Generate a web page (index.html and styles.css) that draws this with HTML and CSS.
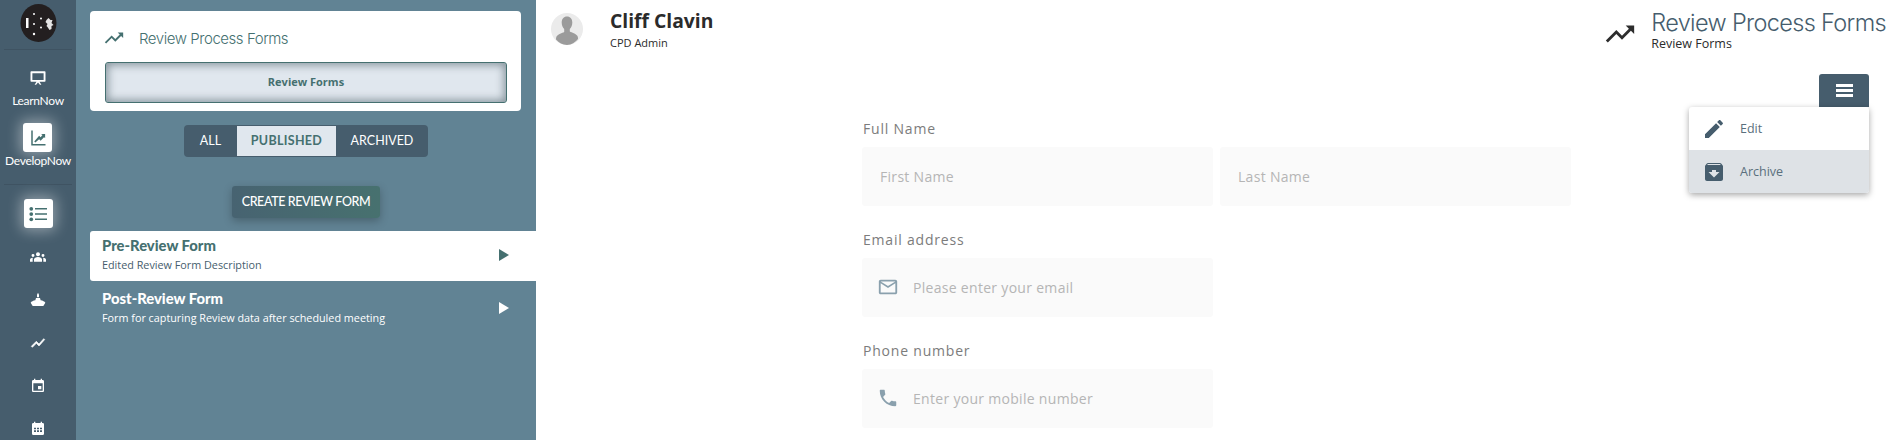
FILE: index.html
```html
<!DOCTYPE html>
<html lang="en">
<head>
    <meta charset="UTF-8">
    <title>Review Process Forms</title>
    <link rel="stylesheet" href="styles.css">
</head>
<body>
<div class="app">
    <!-- left icon rail -->
    <nav class="rail">
        <div class="logo">
            <svg viewBox="0 0 36 38" width="37" height="38">
                <ellipse cx="18" cy="19" rx="18" ry="19" fill="#231f20"/>
                <rect x="5.500" y="14" width="2.500" height="10" fill="#fff"/>
                <circle cx="13.500" cy="10" r="1" fill="#fff"/>
                <circle cx="13.500" cy="20" r="1" fill="#fff"/>
                <circle cx="13.500" cy="30" r="1.200" fill="#fff"/>
                <circle cx="20.500" cy="14.500" r="1" fill="#fff"/>
                <circle cx="20.500" cy="23.500" r="1" fill="#fff"/>
                <path d="M26 16l2-2 2 2 2 0-1 3 2 2-2 1 0 3-2 1-2-3-1-1 1-2-2-2z" fill="#e4e4e4"/>
            </svg>
        </div>
        <div class="rail-group rail-top">
            <a class="rail-item">
                <svg class="rail-icon" viewBox="0 0 24 24" width="18" height="18">
                    <path d="M3 3h18a1 1 0 0 1 1 1v12a1 1 0 0 1-1 1h-7l2.500 4h-2l-2.500-3-2.500 3h-2l2.500-4H3a1 1 0 0 1-1-1V4a1 1 0 0 1 1-1zm1.500 2.500v9h15v-9z" fill="#fff"/>
                </svg>
                <span class="rail-label">LearnNow</span>
            </a>
            <a class="rail-item">
                <span class="rail-box">
                    <svg viewBox="0 0 24 24">
                        <path d="M3 2h2v18h17v2H3z" fill="#457070"/>
                        <path d="M7 16.500l6.500-7.500 2 2 2.500-3-2-1.500h5.500v5.500L20 11l-4.500 4.500-2-2-5 4.500z" fill="#457070"/>
                    </svg>
                </span>
                <span class="rail-label">DevelopNow</span>
            </a>
        </div>
        <div class="rail-group rail-tools">
            <span class="rail-box">
                <svg viewBox="0 0 24 24">
                    <circle cx="3" cy="5" r="2.500" fill="#457070"/>
                    <circle cx="3" cy="12" r="2.500" fill="#457070"/>
                    <circle cx="3" cy="19" r="2.500" fill="#457070"/>
                    <path d="M8 4h16v2H8zM8 11h16v2H8zM8 18h16v2H8z" fill="#457070"/>
                </svg>
            </span>
            <svg class="tool" viewBox="0 0 24 24" width="16" height="16">
                <path d="M12 5a3 3 0 1 1 0 6 3 3 0 0 1 0-6zM4.500 7.500a2.200 2.200 0 1 1 0 4.400 2.200 2.200 0 0 1 0-4.400zm15 0a2.200 2.200 0 1 1 0 4.400 2.200 2.200 0 0 1 0-4.400zM6 19v-3.500c0-2 3-3.500 6-3.500s6 1.500 6 3.500V19zM0 19v-3c0-1.500 2-2.800 4.500-2.800-.4.600-.5 1.500-.5 2.300V19zm24 0h-4v-3.500c0-.8-.1-1.700-.5-2.300 2.500 0 4.500 1.300 4.500 2.800z" fill="#fff"/>
            </svg>
            <svg class="tool" viewBox="0 0 24 24" width="16" height="16">
                <path d="M12 1l1.500 3v4h-3V4zM9 9h6l1 3.500c3 .5 6 2 7 3.500l-3 5H4l-3-5c1-1.500 4-3 7-3.500z" fill="#fff"/>
            </svg>
            <svg class="tool" viewBox="0 0 24 24" width="16" height="16">
                <path d="M3.500 18.490l6-6.010 4 4L22 6.920l-1.410-1.410-7.090 7.970-4-4L2 16.990z" fill="#fff" stroke="#fff"/>
            </svg>
            <svg class="tool" viewBox="0 0 24 24" width="16" height="16">
                <path d="M17 12h-5v5h5v-5zM16 1v2H8V1H6v2H5c-1.110 0-1.990.900-1.990 2L3 19c0 1.100.890 2 2 2h14c1.100 0 2-.900 2-2V5c0-1.100-.900-2-2-2h-1V1h-2zm3 18H5V8h14v11z" fill="#fff"/>
            </svg>
            <svg class="tool" viewBox="0 0 24 24" width="16" height="16">
                <path d="M16 1v2H8V1H6v2H5a2 2 0 0 0-2 2v14a2 2 0 0 0 2 2h14a2 2 0 0 0 2-2V5a2 2 0 0 0-2-2h-1V1zM6 10h3v2.500H6zm4.500 0h3v2.500h-3zm4.500 0h3v2.500h-3zM6 14h3v2.500H6zm4.500 0h3v2.500h-3zm4.500 0h3v2.500h-3z" fill="#fff" fill-rule="evenodd"/>
            </svg>
        </div>
    </nav>

    <!-- forms panel -->
    <section class="panel">
        <div class="card">
            <div class="card-head">
                <svg viewBox="0 0 24 24" width="22" height="22">
                    <path d="M16 6l2.290 2.290-4.880 4.880-4-4L2 16.590 3.410 18l6-6 4 4 6.300-6.290L22 12V6z" fill="#457070"/>
                </svg>
                <span>Review Process Forms</span>
            </div>
            <div class="card-btn">Review Forms</div>
        </div>

        <div class="tabs">
            <span class="tab tab-all">ALL</span>
            <span class="tab active">PUBLISHED</span>
            <span class="tab">ARCHIVED</span>
        </div>

        <div class="create-wrap">
            <button class="create">CREATE REVIEW FORM</button>
        </div>

        <ul class="form-list">
            <li class="form-item selected">
                <div>
                    <h4>Pre-Review Form</h4>
                    <p>Edited Review Form Description</p>
                </div>
                <i class="arrow"></i>
            </li>
            <li class="form-item">
                <div>
                    <h4>Post-Review Form</h4>
                    <p>Form for capturing Review data after scheduled meeting</p>
                </div>
                <i class="arrow"></i>
            </li>
        </ul>
    </section>

    <!-- main content -->
    <main class="main">
        <header class="topbar">
            <div class="user">
                <svg class="avatar" viewBox="0 0 32 32" width="32" height="32">
                    <circle cx="16" cy="16" r="16" fill="#ebebeb"/>
                    <path d="M16 3.500c3.300 0 5.300 2.500 5.300 6 0 2.700-1 5-2.500 6.500v2.500c2 1.200 6.200 2 7.700 4.500.5 1 .5 2 .5 3A16 16 0 0 1 16 32a16 16 0 0 1-11-5.500c0-1 0-2 .5-3 1.500-2.500 5.700-3.300 7.700-4.500V16c-1.500-1.500-2.500-3.800-2.500-6.500 0-3.500 2-6 5.300-6z" fill="#9b9b9b"/>
                </svg>
                <div>
                    <div class="user-name">Cliff Clavin</div>
                    <div class="user-role">CPD Admin</div>
                </div>
            </div>
            <div class="page-title">
                <svg viewBox="0 0 24 24" width="34" height="34">
                    <path d="M16 6l2.290 2.290-4.880 4.880-4-4L2 16.590 3.410 18l6-6 4 4 6.300-6.290L22 12V6z" fill="#2d2d2d"/>
                </svg>
                <div>
                    <div class="page-name">Review Process Forms</div>
                    <div class="page-sub">Review Forms</div>
                </div>
            </div>
        </header>

        <div class="actions">
            <button class="menu-btn"><i></i><i></i><i></i></button>
            <div class="menu">
                <div class="menu-item">
                    <svg viewBox="0 0 24 24" width="24" height="24">
                        <path d="M3 17.250V21h3.750L17.810 9.940l-3.750-3.750L3 17.250zM20.710 7.040c.390-.390.390-1.020 0-1.410l-2.340-2.340c-.390-.390-1.020-.390-1.410 0l-1.830 1.830 3.750 3.750 1.830-1.830z" fill="#465d6d"/>
                    </svg>
                    Edit
                </div>
                <div class="menu-item hover">
                    <svg viewBox="0 0 24 24" width="24" height="24">
                        <path d="M20.540 5.230l-1.390-1.680C18.880 3.210 18.470 3 18 3H6c-.470 0-.880.210-1.160.550L3.460 5.230C3.170 5.570 3 6.020 3 6.500V19c0 1.100.900 2 2 2h14c1.100 0 2-.900 2-2V6.500c0-.480-.170-.930-.460-1.270zM12 17.500L6.500 12H10v-2h4v2h3.500L12 17.500zM5.120 5l.810-1h12l.940 1H5.120z" fill="#465d6d"/>
                    </svg>
                    Archive
                </div>
            </div>
        </div>

        <form class="form">
            <label class="field-label">Full Name</label>
            <div class="row">
                <div class="input"><span>First Name</span></div>
                <div class="input"><span>Last Name</span></div>
            </div>

            <label class="field-label">Email address</label>
            <div class="row">
                <div class="input with-icon">
                    <svg viewBox="0 0 24 24" width="22" height="22">
                        <path d="M20 4H4c-1.100 0-1.990.900-1.990 2L2 18c0 1.100.900 2 2 2h16c1.100 0 2-.900 2-2V6c0-1.100-.900-2-2-2zm0 14H4V8l8 5 8-5v10zm-8-7L4 6h16l-8 5z" fill="#8aa0ad"/>
                    </svg>
                    <span>Please enter your email</span>
                </div>
            </div>

            <label class="field-label">Phone number</label>
            <div class="row">
                <div class="input with-icon">
                    <svg viewBox="0 0 24 24" width="22" height="22">
                        <path d="M6.620 10.790c1.440 2.830 3.760 5.140 6.590 6.590l2.200-2.200c.270-.270.670-.360 1.020-.240 1.120.370 2.330.570 3.570.570.550 0 1 .450 1 1V20c0 .550-.450 1-1 1-9.390 0-17-7.610-17-17 0-.550.450-1 1-1h3.500c.550 0 1 .450 1 1 0 1.250.200 2.450.570 3.570.110.350.030.740-.250 1.020l-2.200 2.200z" fill="#8aa0ad"/>
                    </svg>
                    <span>Enter your mobile number</span>
                </div>
            </div>
        </form>
    </main>
</div>
</body>
</html>
```

FILE: styles.css
```css
* {
    box-sizing: border-box;
}

body {
    margin: 0;
    height: 440px;
    overflow: hidden;
    font-family: "Open Sans", sans-serif;
    background: #fff;
}

.app {
    display: flex;
    height: 440px;
}

/* icon rail */
.rail {
    width: 76px;
    flex: none;
    background: #465d6d;
    display: flex;
    flex-direction: column;
    align-items: center;
    padding-top: 4px;
    overflow: hidden;
}

.logo {
    height: 45px;
    display: flex;
    align-items: flex-start;
}

.rail-group {
    width: 68px;
    border-top: 1px solid #3f5362;
    display: flex;
    flex-direction: column;
    align-items: center;
}

.rail-top {
    padding-top: 19px;
    height: 135px;
    gap: 15px;
}

.rail-item {
    display: flex;
    flex-direction: column;
    align-items: center;
    gap: 6px;
}

.rail-top .rail-item + .rail-item {
    gap: 1px;
}

.rail-label {
    color: #fff;
    font-family: Lato, sans-serif;
    font-size: 12px;
    letter-spacing: -0.3px;
    line-height: 15px;
}

.rail-box {
    width: 29px;
    height: 29px;
    background: #fff;
    border-radius: 3px;
    display: flex;
    align-items: center;
    justify-content: center;
    box-shadow: 0 0 14px 3px rgba(255, 255, 255, 0.4);
}

.rail-box svg {
    width: 18px;
    height: 18px;
}

.rail-tools {
    padding-top: 14px;
    gap: 27px;
}

.rail-tools .rail-box {
    margin-bottom: -6px;
}

/* panel */
.panel {
    width: 460px;
    flex: none;
    background: #618394;
    padding: 11px 0 0 14px;
}

.card {
    width: 431px;
    height: 100px;
    background: #fff;
    border-radius: 4px;
    padding: 15px 14px 0 15px;
}

.card-head {
    display: flex;
    align-items: center;
    gap: 14px;
    height: 24px;
    margin: 0 0 12px -2px;
    color: #457070;
    font-family: Inter, sans-serif;
    font-weight: 300;
    font-size: 15px;
    letter-spacing: -0.45px;
}

.card-btn {
    height: 41px;
    padding-bottom: 2px;
    background: #e0e7ee;
    border: 1px solid #457070;
    border-radius: 3px;
    box-shadow: inset 0 0 8px 2px rgba(60, 80, 90, 0.55);
    color: #457070;
    font-size: 11px;
    font-weight: 700;
    display: flex;
    align-items: center;
    justify-content: center;
}

.tabs {
    display: flex;
    width: 244px;
    height: 32px;
    margin: 14px 0 0 94px;
    background: #465d6d;
    border-radius: 4px;
    overflow: hidden;
    color: #fff;
    font-family: Lato, sans-serif;
    font-size: 12.500px;
}

.tab {
    display: flex;
    align-items: center;
    justify-content: center;
    flex: 1;
    padding-bottom: 2px;
}

.tab-all {
    flex: none;
    width: 53px;
}

.tab.active {
    flex: none;
    width: 99px;
    margin: 1px 0;
    background: #e0e7ee;
    color: #457070;
    font-weight: 700;
    letter-spacing: 0.3px;
}

.create-wrap {
    margin-top: 29px;
    padding-left: 142px;
}

.create {
    display: block;
    width: 148px;
    height: 32px;
    padding: 0 0 2px;
    border: none;
    border-radius: 3px;
    background: linear-gradient(90deg, #476371, #47716f);
    box-shadow: 0 3px 8px rgba(0, 0, 0, 0.25);
    color: #fff;
    font-family: Lato, sans-serif;
    font-size: 12.500px;
    font-weight: 500;
    letter-spacing: -0.4px;
}

.form-list {
    list-style: none;
    margin: 13px 0 0;
    padding: 0;
}

.form-item {
    height: 50px;
    padding: 8px 27px 0 12px;
    display: flex;
    justify-content: space-between;
    align-items: flex-start;
    color: #fff;
    border-radius: 3px 0 0 3px;
}

.form-item.selected {
    padding-top: 5px;
    background: #fff;
    color: #465d6d;
}

.form-item h4 {
    margin: 0;
    font-family: Lato, sans-serif;
    font-size: 14.800px;
    font-weight: 900;
    line-height: 18px;
}

.form-item.selected h4 {
    color: #457070;
}

.form-item p {
    margin: 3px 0 0;
    font-size: 10.800px;
    line-height: 15px;
}

.arrow {
    width: 0;
    height: 0;
    margin-top: 13px;
    border-left: 10px solid #fff;
    border-top: 6.500px solid transparent;
    border-bottom: 6.500px solid transparent;
}

.selected .arrow {
    border-left-color: #457070;
}

/* main */
.main {
    flex: 1;
    min-width: 0;
    position: relative;
}

.topbar {
    display: flex;
    justify-content: space-between;
    padding: 9px 12px 0 15px;
    height: 74px;
}

.user {
    display: flex;
    align-items: flex-start;
    gap: 27px;
}

.avatar {
    margin-top: 4px;
}

.user-name {
    font-size: 19.300px;
    font-weight: 700;
    line-height: 24px;
    color: #2b2b2b;
}

.user-role {
    font-size: 11px;
    line-height: 16px;
    margin-top: 2px;
    color: #2b2b2b;
}

.page-title {
    display: flex;
    align-items: flex-start;
    gap: 14px;
}

.page-title svg {
    margin-top: 8px;
}

.page-name {
    font-family: Inter, sans-serif;
    font-weight: 300;
    font-size: 23.500px;
    letter-spacing: -0.65px;
    line-height: 28px;
    color: #465d6d;
}

.page-sub {
    font-size: 12.500px;
    line-height: 14px;
    color: #2b2b2b;
}

.actions {
    position: absolute;
    top: 74px;
    right: 29px;
    display: flex;
    flex-direction: column;
    align-items: flex-end;
}

.menu-btn {
    width: 50px;
    height: 33px;
    padding: 0;
    border: none;
    border-radius: 3px 3px 0 0;
    background: #465d6d;
    display: flex;
    flex-direction: column;
    align-items: center;
    justify-content: center;
    gap: 2px;
}

.menu-btn i {
    display: block;
    width: 17px;
    height: 3px;
    background: #fff;
}

.menu {
    width: 180px;
    background: #fff;
    border-radius: 3px;
    overflow: hidden;
    box-shadow: 0 2px 6px rgba(0, 0, 0, 0.35);
}

.menu-item {
    height: 43px;
    padding-left: 13px;
    display: flex;
    align-items: center;
    gap: 14px;
    color: #5a6f7d;
    font-size: 12.500px;
}

.menu-item.hover {
    background: #dee2e6;
}

.form {
    width: 709px;
    margin: 46px 0 0 326px;
}

.field-label {
    display: block;
    height: 19px;
    line-height: 17px;
    margin: 0 0 8px 1px;
    color: #7c7c7c;
    font-size: 14px;
    letter-spacing: 0.8px;
}

.row {
    display: flex;
    gap: 7px;
    margin-bottom: 25px;
}

.input {
    width: 351px;
    height: 59px;
    background: #fafafa;
    border-radius: 3px;
    padding-left: 18px;
    padding-bottom: 1px;
    display: flex;
    align-items: center;
    gap: 14px;
    color: #b5b5b5;
    font-size: 14px;
    letter-spacing: 0.3px;
}

.input.with-icon {
    padding-left: 15px;
}
```
